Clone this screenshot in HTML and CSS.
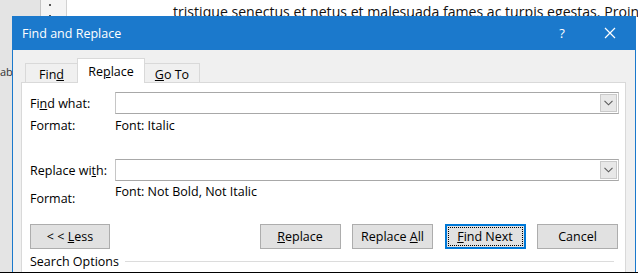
FILE: index.html
```html
<!DOCTYPE html>
<html>
<head>
    <title>Find and Replace</title>
	<link rel="stylesheet" href="styles.css">
</head>
<body>
	<div class="desk">
		<div class="gutter"><span class="gutter-text">ab</span></div>
		<div class="ruler">
			<span class="tick"></span>
			<span class="tick"></span>
		</div>
		<div class="page">
			<p class="doc-line">tristique senectus et netus et malesuada fames ac turpis egestas. Proin</p>
		</div>

		<div class="dialog">
			<div class="titlebar">
				<span class="title">Find and Replace</span>
				<span class="tbtn help">?</span>
				<span class="tbtn close">
					<svg width="12" height="12" viewBox="0 0 12 12"><path d="M1 1 L11 11 M11 1 L1 11" stroke="#fff" stroke-width="1.2" fill="none"/></svg>
				</span>
			</div>
			<div class="body">
				<div class="tabs">
					<span class="tab tab-find">Fin<u>d</u></span>
					<span class="tab tab-replace active">Re<u>p</u>lace</span>
					<span class="tab tab-goto"><u>G</u>o To</span>
				</div>
				<div class="panel">
					<div class="field-row">
						<label>Fi<u>n</u>d what:</label>
						<div class="combo">
							<span class="combo-text"></span>
							<span class="drop">
								<svg width="9" height="6" viewBox="0 0 9 6"><path d="M0.5 0.8 L4.5 4.8 L8.5 0.8" stroke="#5a5a5a" stroke-width="1.1" fill="none"/></svg>
							</span>
						</div>
					</div>
					<div class="format-row">
						<span class="fmt-label">Format:</span>
						<span class="fmt-value">Font: Italic</span>
					</div>

					<div class="field-row second">
						<label>Replace wi<u>t</u>h:</label>
						<div class="combo">
							<span class="combo-text"></span>
							<span class="drop">
								<svg width="9" height="6" viewBox="0 0 9 6"><path d="M0.5 0.8 L4.5 4.8 L8.5 0.8" stroke="#5a5a5a" stroke-width="1.1" fill="none"/></svg>
							</span>
						</div>
					</div>
					<div class="format-row low">
						<span class="fmt-label">Format:</span>
						<span class="fmt-value">Font: Not Bold, Not Italic</span>
					</div>

					<div class="buttons">
						<button class="btn">&lt; &lt; <u>L</u>ess</button>
						<div class="btn-group">
							<button class="btn"><u>R</u>eplace</button>
							<button class="btn">Replace <u>A</u>ll</button>
							<button class="btn focus"><u>F</u>ind Next</button>
							<button class="btn">Cancel</button>
						</div>
					</div>
					<div class="options">Search Options</div>
				</div>
			</div>
		</div>
	</div>
</body>
</html>
```

FILE: styles.css
```css
body{
	margin: 0;
	width: 638px;
	height: 280px;
	overflow: hidden;
	background: #fff;
	font-family: "Open Sans", "Noto Sans", sans-serif;
}
.desk{
	position: relative;
	display: flex;
	height: 272px;
	border-bottom: 1px solid #000;
	overflow: hidden;
}
.gutter{
	width: 40px;
	background: #e4e4e4;
	border-right: 1px solid #c4c4c4;
	position: relative;
}
.gutter-text{
	position: absolute;
	left: 0;
	top: 64px;
	font-size: 11px;
	color: #333;
}
.ruler{
	width: 26px;
	background: #f4f4f4;
	border-right: 1px solid #d2d2d2;
	display: flex;
	flex-direction: column;
	align-items: center;
	gap: 9px;
	padding-top: 4px;
	box-sizing: border-box;
}
.tick{
	width: 2px;
	height: 2px;
	background: #555;
	margin-left: -8px;
}
.page{
	flex: 1;
	background: #fff;
	padding-left: 106px;
	overflow: hidden;
}
.doc-line{
	margin: 0;
	white-space: nowrap;
	font-size: 14.1px;
	line-height: 20px;
	margin-top: 2px;
	color: #111;
}

/* dialog */
.dialog{
	position: absolute;
	left: 12px;
	top: 16px;
	width: 624px;
	height: 290px;
	box-sizing: border-box;
	border: 1px solid #1b79cc;
	border-top: none;
	background: #f0f0f0;
	display: flex;
	flex-direction: column;
}
.titlebar{
	height: 34px;
	background: #1b79cc;
	color: #fff;
	display: flex;
	align-items: center;
	padding-left: 9px;
}
.title{
	font-size: 12.5px;
}
.tbtn{
	width: 46px;
	height: 34px;
	display: flex;
	align-items: center;
	justify-content: center;
}
.help{
	margin-left: auto;
	font-size: 13px;
	margin-right: 2px;
}
.close{
	margin-right: 2px;
}
.body{
	flex: 1;
	padding: 8px 9px 0 8px;
	display: flex;
	flex-direction: column;
	font-size: 12.5px;
	color: #000;
}
.tabs{
	display: flex;
	align-items: flex-end;
	padding-left: 4px;
	height: 24px;
}
.tab{
	height: 20px;
	box-sizing: border-box;
	border: 1px solid #d9d9d9;
	border-bottom: none;
	background: #f0f0f0;
	display: flex;
	align-items: center;
	justify-content: center;
	margin-bottom: -1px;
	padding-top: 2px;
}
.tab-find{ width: 53px; margin-right: -1px; }
.tab-replace{ width: 68px; }
.tab-goto{ width: 56px; margin-left: -1px; }
.tab.active{
	height: 25px;
	background: #fff;
	position: relative;
	z-index: 1;
	padding-top: 1px;
}
.panel{
	flex: 1;
	background: #fff;
	border: 1px solid #d9d9d9;
	padding: 9px 6px 0 8px;
}
.field-row{
	display: grid;
	grid-template-columns: 85px 1fr;
	align-items: center;
	height: 22px;
}
.field-row.second{
	margin-top: 21px;
}
.combo{
	height: 22px;
	box-sizing: border-box;
	border: 1px solid #a8a8a8;
	border-left-color: #c6c6c6;
	border-right-color: #c6c6c6;
	display: flex;
}
.combo-text{
	flex: 1;
}
.drop{
	width: 17px;
	margin: 1px;
	box-sizing: border-box;
	border: 1px solid #c9c9c9;
	background: #e8e8e8;
	display: flex;
	align-items: center;
	justify-content: center;
}
.format-row{
	display: grid;
	grid-template-columns: 85px 1fr;
	height: 24px;
	line-height: 24px;
}
.format-row.low{
	height: 29px;
	line-height: 22px;
}
.format-row.low .fmt-label{
	padding-top: 7px;
}
.buttons{
	display: flex;
	margin-top: 14px;
	height: 25px;
}
.btn-group{
	margin-left: auto;
	margin-right: 1px;
	display: flex;
	gap: 11.5px;
}
.btn{
	width: 81px;
	height: 25px;
	box-sizing: border-box;
	background: #e1e1e1;
	border: 1px solid #adadad;
	font-family: inherit;
	font-size: 12.5px;
	color: #000;
	padding: 0;
}
.buttons > .btn{
	width: 80px;
}
.btn.focus{
	border: 2px solid #0078d7;
	outline: 1px dotted #000;
	outline-offset: -4px;
}
.options{
	display: flex;
	align-items: center;
	height: 22px;
	margin-top: 1px;
}
.options::after{
	content: "";
	flex: 1;
	height: 1px;
	background: #dcdcdc;
	margin-left: 6px;
	margin-right: 5px;
}
```
